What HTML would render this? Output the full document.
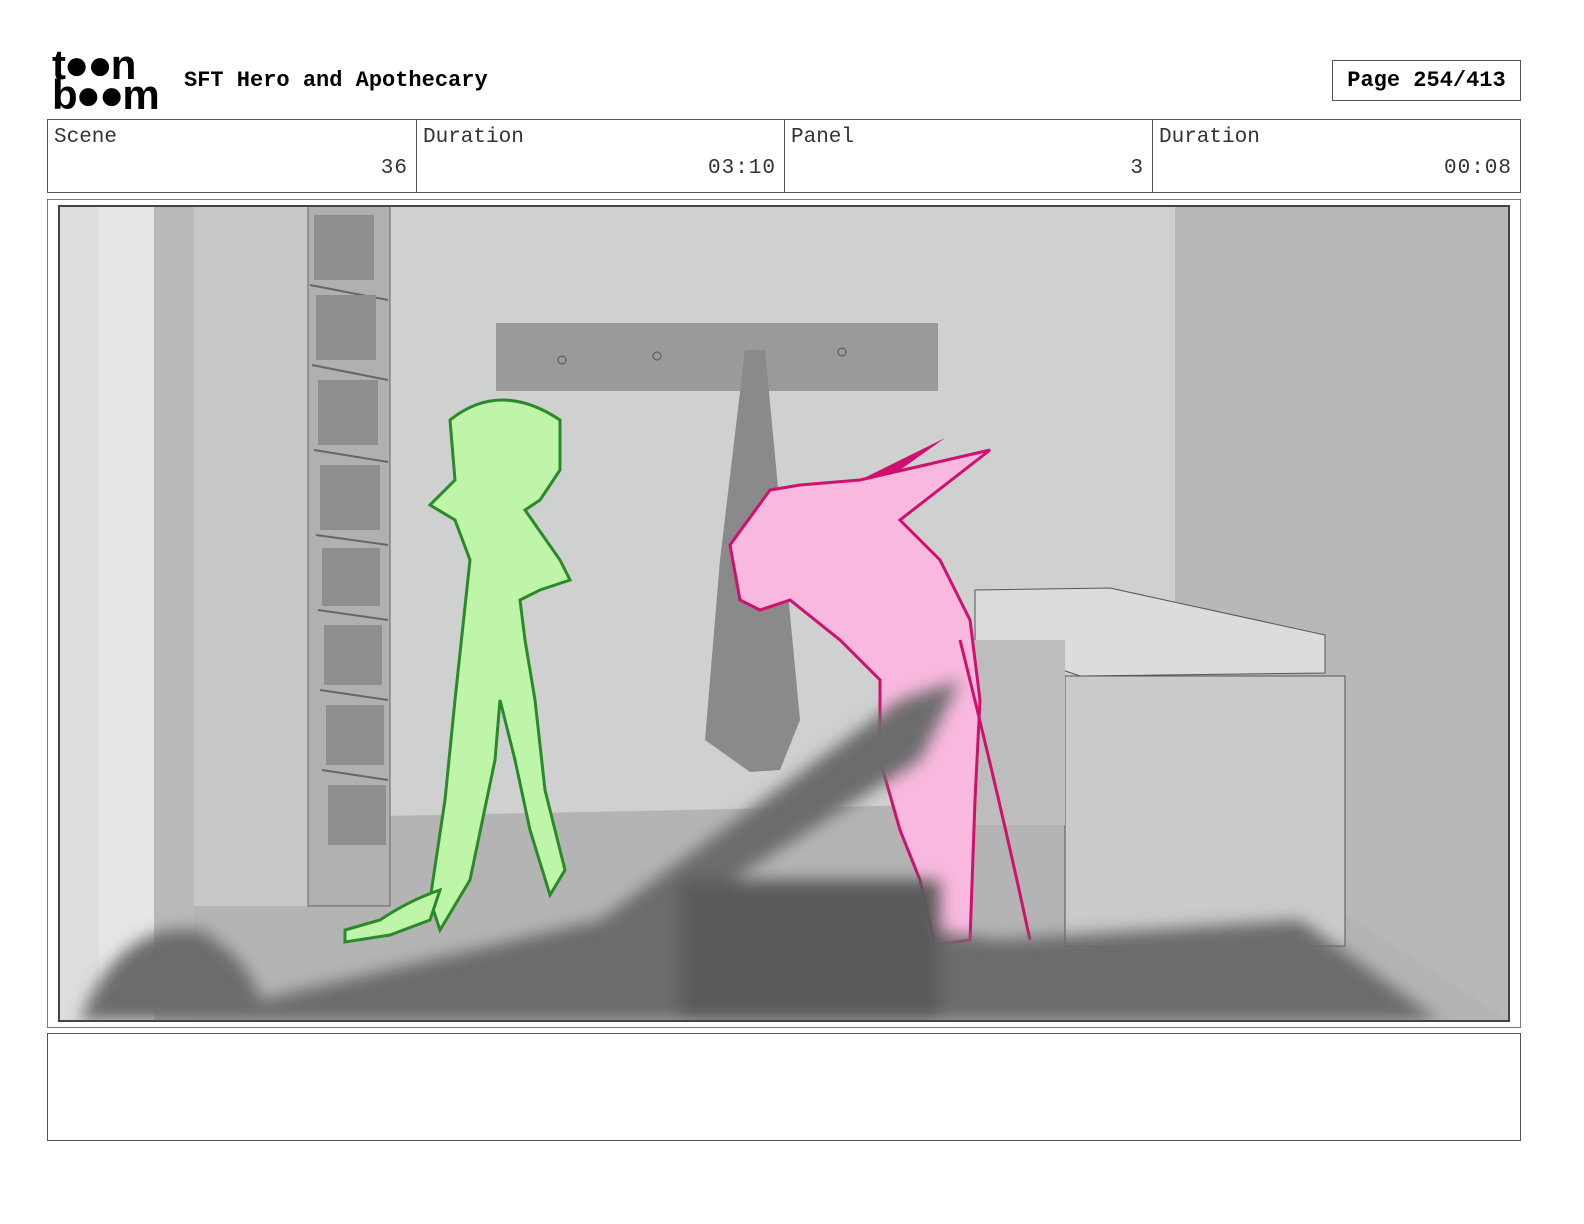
<!DOCTYPE html>
<html><head><meta charset="utf-8"><style>
body{margin:0;width:1584px;height:1224px;background:#fff;position:relative;font-family:"Liberation Mono",monospace;overflow:hidden}
.a{position:absolute}
.cell{position:absolute;top:119px;height:74px;border:1px solid #555;box-sizing:border-box;font-size:21px;color:#333}
.cell .l{position:absolute;left:6px;top:6px}
.cell .v{position:absolute;right:8px;top:37px;letter-spacing:1px}
</style></head><body>
<div class="a" style="left:52px;top:50px;font-family:'Liberation Sans',sans-serif;font-weight:bold;font-size:42px;line-height:30px;letter-spacing:-2px;color:#000">t●●n<br>b●●m</div>
<div class="a" style="left:184px;top:68px;font-weight:bold;font-size:22px">SFT Hero and Apothecary</div>
<div class="a" style="left:1332px;top:60px;width:189px;height:41px;border:1px solid #555;box-sizing:border-box;font-weight:bold;font-size:22px;text-align:center;line-height:39px">Page 254/413</div>
<div class="cell" style="left:47px;width:370px"><span class="l">Scene</span><span class="v">36</span></div>
<div class="cell" style="left:416px;width:369px"><span class="l">Duration</span><span class="v">03:10</span></div>
<div class="cell" style="left:784px;width:369px"><span class="l">Panel</span><span class="v">3</span></div>
<div class="cell" style="left:1152px;width:369px"><span class="l">Duration</span><span class="v">00:08</span></div>
<div class="a" style="left:47px;top:199px;width:1474px;height:829px;border:1px solid #777;box-sizing:border-box"></div>
<svg class="a" style="left:0;top:0" width="1584" height="1224" viewBox="0 0 1584 1224">
<defs><filter id="b"><feGaussianBlur stdDeviation="8"/></filter><clipPath id="c"><rect x="59" y="206" width="1450" height="815"/></clipPath></defs>
<g clip-path="url(#c)">
<rect x="59" y="206" width="1450" height="815" fill="#cfd0d0"/>
<rect x="1175" y="206" width="334" height="815" fill="#b8b8b8"/>
<polygon points="190,820 1175,800 1509,1021 190,1021" fill="#b4b4b4"/>
<rect x="59" y="206" width="40" height="815" fill="#dedede"/>
<rect x="99" y="206" width="55" height="815" fill="#e6e6e6"/>
<rect x="154" y="206" width="40" height="815" fill="#b9b9b9"/>
<rect x="194" y="206" width="120" height="700" fill="#c8c8c8"/>
<rect x="308" y="206" width="82" height="700" fill="#b0b0b0" stroke="#666"/>
<g stroke="#666" stroke-width="2"><line x1="310" y1="285" x2="388" y2="300"/><line x1="312" y1="365" x2="388" y2="380"/><line x1="314" y1="450" x2="388" y2="462"/><line x1="316" y1="535" x2="388" y2="545"/><line x1="318" y1="610" x2="388" y2="620"/><line x1="320" y1="690" x2="388" y2="700"/><line x1="322" y1="770" x2="388" y2="780"/></g>
<g fill="#8e8e8e"><rect x="314" y="215" width="60" height="65"/><rect x="316" y="295" width="60" height="65"/><rect x="318" y="380" width="60" height="65"/><rect x="320" y="465" width="60" height="65"/><rect x="322" y="548" width="58" height="58"/><rect x="324" y="625" width="58" height="60"/><rect x="326" y="705" width="58" height="60"/><rect x="328" y="785" width="58" height="60"/></g>
<rect x="496" y="323" width="442" height="68" fill="#9a9a9a"/>
<circle cx="562" cy="360" r="4" fill="none" stroke="#555"/><circle cx="657" cy="356" r="4" fill="none" stroke="#555"/><circle cx="842" cy="352" r="4" fill="none" stroke="#555"/>
<path d="M745 350 L765 350 L800 720 L780 770 L750 772 L705 740 L720 560 Z" fill="#8a8a8a"/>
<polygon points="975,590 1110,588 1325,635 1325,673 1080,676 975,640" fill="#dcdcdc" stroke="#555"/>
<rect x="1065" y="676" width="280" height="270" fill="#cacaca" stroke="#555"/>
<rect x="960" y="640" width="105" height="185" fill="#bdbdbd"/>
<path d="M450 420 Q500 380 560 420 L560 470 L540 500 L525 510 L560 560 L570 580 L540 590 L520 600 L525 640 L535 700 L545 790 L565 870 L550 895 L530 830 L515 760 L500 700 L495 760 L470 880 L440 930 L430 900 L445 800 L455 700 L470 560 L455 520 L430 505 L455 480 Z" fill="#bff5a8" stroke="#2a8a2a" stroke-width="3"/>
<path d="M440 890 Q410 900 380 920 L345 930 L345 942 L390 935 L430 920 Z" fill="#bff5a8" stroke="#2a8a2a" stroke-width="3"/>
<path d="M730 545 L770 490 L800 485 L860 480 L990 450 L900 520 L940 560 L970 620 L980 700 L975 800 L970 940 L935 945 L920 880 L900 830 L880 760 L880 680 L840 640 L790 600 L760 610 L740 600 Z" fill="#f9b9de" stroke="#d0106e" stroke-width="3"/>
<path d="M860 480 L945 438 L900 470 Z" fill="#d0106e"/>
<path d="M960 640 Q1000 800 1030 940" fill="none" stroke="#d0106e" stroke-width="3"/>
<g filter="url(#b)" fill="#6c6c6c">
<path d="M80 1021 Q120 920 200 930 Q250 960 260 1000 L600 920 L900 700 L960 680 L920 760 L700 900 L1000 940 L1300 920 L1440 1021 Z"/>
<rect x="680" y="880" width="260" height="141" fill="#5a5a5a"/>
</g>
</g>
<rect x="59" y="206" width="1450" height="815" fill="none" stroke="#444" stroke-width="2"/>
</svg>
<div class="a" style="left:47px;top:1033px;width:1474px;height:108px;border:1px solid #555;box-sizing:border-box"></div>
</body></html>
